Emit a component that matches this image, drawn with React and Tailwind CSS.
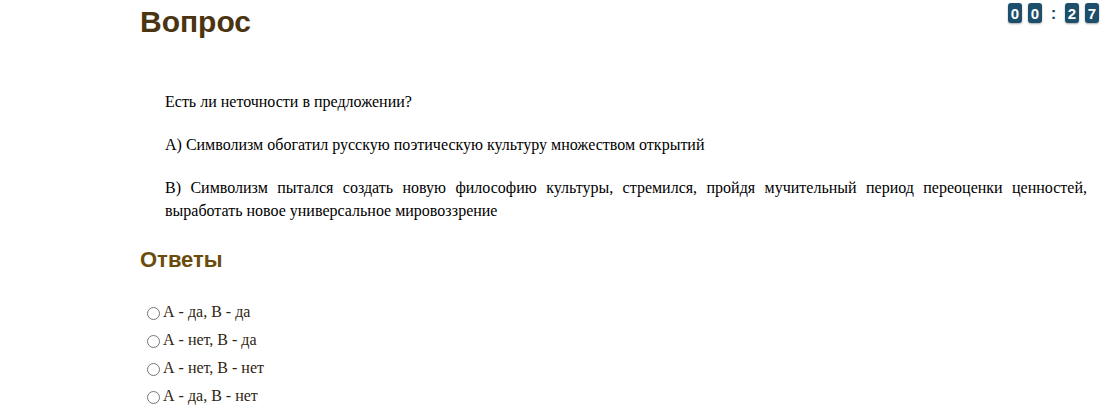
import React from 'react';

const answers = ['А - да, В - да', 'А - нет, В - да', 'А - нет, В - нет', 'А - да, В - нет'];

const Digit = ({ value }) => (
  <span className="w-[14px] h-[20px] rounded-[3px] bg-[#1d4f6c] text-white font-bold text-[15px] leading-none flex items-center justify-center shadow-[0_1px_2px_rgba(0,0,0,0.35)]">
    {value}
  </span>
);

export default function App() {
  return (
    <div className="w-[1108px] h-[415px] bg-white overflow-hidden font-['Liberation_Sans',Arial,sans-serif]">
      <div className="flex justify-between pl-[140px] pr-[9px]">
        <h1 className="text-[30px] font-bold text-[#4a3411] leading-[44px]">Вопрос</h1>
        <div className="flex items-center pt-[3px] h-[23px]">
          <Digit value="0" />
          <span className="w-[6px]" />
          <Digit value="0" />
          <span className="w-[23px] text-center font-bold text-[17px] text-[#1d4f6c] leading-none">:</span>
          <Digit value="2" />
          <span className="w-[6px]" />
          <Digit value="7" />
        </div>
      </div>

      <div className="pl-[165px] pr-[21px] pt-[46px] text-[16px] text-black leading-[23px] text-justify font-['Liberation_Serif','Times_New_Roman',serif]">
        <p>Есть ли неточности в предложении?</p>
        <p className="mt-[20px]">А) Символизм обогатил русскую поэтическую культуру множеством открытий</p>
        <p className="mt-[20px]">В) Символизм пытался создать новую философию культуры, стремился, пройдя мучительный период переоценки ценностей, выработать новое универсальное мировоззрение</p>
      </div>

      <h2 className="pl-[140px] mt-[23px] text-[22px] font-bold text-[#6a4c0c] leading-[30px]">Ответы</h2>

      <div className="pl-[147px] mt-[25px] flex flex-col gap-[5px] text-[16px] text-[#2e2412] font-['Liberation_Serif','Times_New_Roman',serif]">
        {answers.map((a) => (
          <label key={a} className="flex items-center h-[23px]">
            <input type="radio" name="ans" className="w-[13px] h-[13px] m-0 mr-[3px] mt-[4px]" />
            <span>{a}</span>
          </label>
        ))}
      </div>
    </div>
  );
}
